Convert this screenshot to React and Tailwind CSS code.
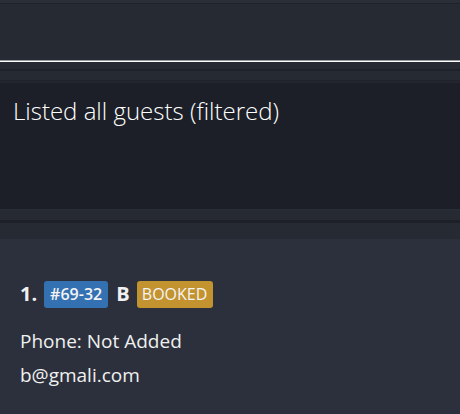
export default function App() {
  const font = { fontFamily: '"Open Sans", "Noto Sans", sans-serif' };
  return (
    <div className="w-[460px] h-[414px] overflow-hidden bg-[#262a33] flex flex-col" style={font}>
      <div className="h-[3px] bg-[#2a2e37]" />
      <div className="h-[1px] bg-[#1f222a]" />
      <div className="h-[56px] bg-[#262a33]" />
      <div className="h-[1px] bg-[#9a9da3]" />
      <div className="h-[1px] bg-[#ffffff]" />
      <div className="h-[7px] bg-[#262a33]" />
      <div className="h-[2px] bg-[#1f222a]" />
      <div className="h-[9px] bg-[#262a33]" />
      <div className="h-[1px] bg-[#1f222a]" />
      <div className="h-[2px] bg-[#23262e]" />
      <div className="h-[126px] bg-[#1c1f27] pl-[13px] pt-[12px]">
        <div className="text-[24px] font-light text-white leading-[32px]">Listed all guests (filtered)</div>
      </div>
      <div className="h-[1px] bg-[#2a2e37]" />
      <div className="h-[10px] bg-[#262a33]" />
      <div className="h-[3px] bg-[#1d2027]" />
      <div className="h-[16px] bg-[#262a33]" />
      <div className="flex-1 bg-[#2c303c] pl-[20px] pt-[40px] text-[#f0f0f0]">
        <div className="flex items-center">
          <span className="text-[20px] font-bold">1.</span>
          <span className="ml-[7px] bg-[#3471b3] text-[#f4f4f4] text-[16px] font-semibold rounded-[3px] h-[27px] w-[64px] flex items-center justify-center">#69-32</span>
          <span className="ml-[8px] text-[20px] font-bold">B</span>
          <span className="ml-[7px] bg-[#c3932f] text-[#f4f4f4] text-[16px] rounded-[3px] h-[27px] w-[76px] flex items-center justify-center">BOOKED</span>
        </div>
        <div className="mt-[19px] text-[19px] leading-[26px]">Phone: Not Added</div>
        <div className="mt-[8px] text-[19px] leading-[26px]">b@gmali.com</div>
      </div>
    </div>
  );
}
